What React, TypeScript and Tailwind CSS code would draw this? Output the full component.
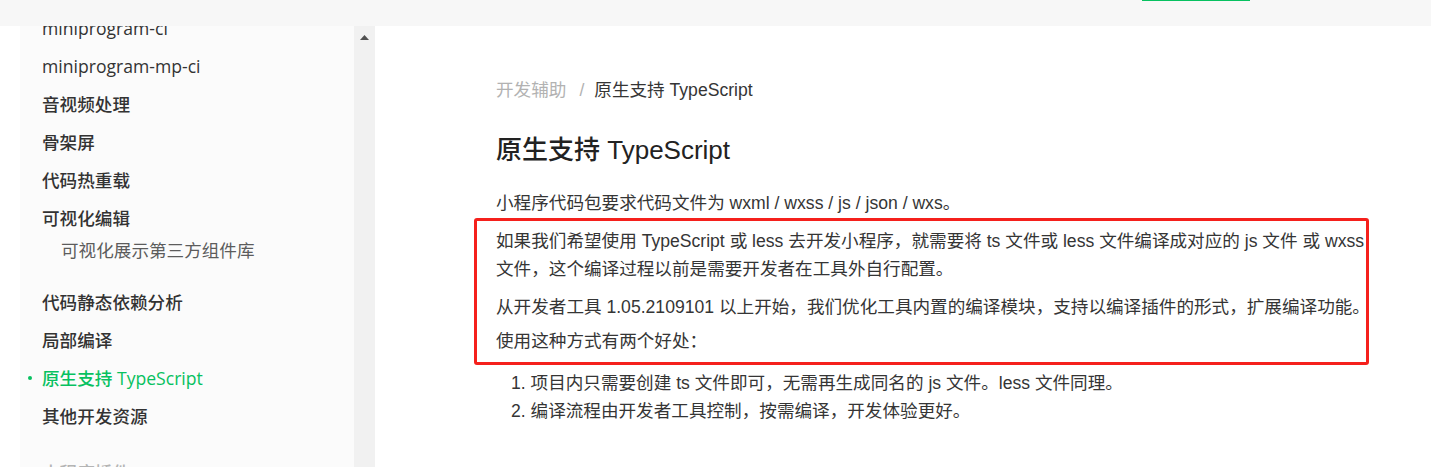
import React from "react";

type NavItem = {
  label: string;
  sub?: boolean;
  active?: boolean;
  muted?: boolean;
};

const NAV_ITEMS: NavItem[] = [
  { label: "miniprogram-ci" },
  { label: "miniprogram-mp-ci" },
  { label: "音视频处理" },
  { label: "骨架屏" },
  { label: "代码热重载" },
  { label: "可视化编辑" },
  { label: "可视化展示第三方组件库", sub: true },
  { label: "代码静态依赖分析" },
  { label: "局部编译" },
  { label: "原生支持 TypeScript", active: true },
  { label: "其他开发资源" },
  { label: "小程序插件", muted: true },
];

function SideNav() {
  return (
    <aside className="flex w-[375px] shrink-0 font-['Open_Sans','Noto_Sans_CJK_SC',sans-serif]">
      <div className="w-[20px] bg-white" />
      <div className="w-[334px] overflow-hidden bg-[#fbfbfb]">
        <ul className="-mt-[17px] pl-[22px]">
          {NAV_ITEMS.map((item) => {
            if (item.sub) {
              return (
                <li
                  key={item.label}
                  className="mb-[20px] flex h-[26px] items-center pl-[19px] text-[17.6px] text-[#5c5c5c]"
                >
                  {item.label}
                </li>
              );
            }
            if (item.muted) {
              return (
                <li
                  key={item.label}
                  className="mt-[18px] flex h-[38px] items-center text-[17.6px] font-medium text-[#b4b4b4]"
                >
                  {item.label}
                </li>
              );
            }
            return (
              <li
                key={item.label}
                className={
                  item.active
                    ? "flex h-[38px] items-center text-[17.6px] font-medium text-[#07c160]"
                    : "flex h-[38px] items-center text-[17.6px] font-medium text-[#333333]"
                }
              >
                {item.active && (
                  <span className="-ml-[14px] mr-[10px] h-[4px] w-[4px] rounded-full bg-[#07c160]" />
                )}
                {item.label}
              </li>
            );
          })}
        </ul>
      </div>
      <div className="flex w-[21px] justify-center bg-[#f1f1f1] pt-[9px]">
        <svg width="9" height="5" viewBox="0 0 9 5">
          <polygon points="4.5,0 9,5 0,5" fill="#505050" />
        </svg>
      </div>
    </aside>
  );
}

function Article() {
  return (
    <main className="flex-1 bg-white pl-[121px] pt-[50px] text-[17.6px] leading-[28px] text-[#353535]">
      <div className="w-[888px]">
        <div className="flex">
          <span className="text-[#b2b2b2]">开发辅助</span>
          <span className="ml-[13px] mr-[10px] text-[#b2b2b2]">/</span>
          <span>原生支持 TypeScript</span>
        </div>

        <h1 className="mt-[28px] text-[26px] font-medium leading-[36px] text-[#222222]">
          原生支持 TypeScript
        </h1>

        <p className="mt-[21px] mb-[10px]">
          小程序代码包要求代码文件为 wxml / wxss / js / json / wxs。
        </p>

        <div className="relative">
          <p className="mb-[10px]">
            如果我们希望使用 TypeScript 或 less 去开发小程序，就需要将 ts 文件或 less 文件编译成对应的 js 文件 或 wxss 文件，这个编译过程以前是需要开发者在工具外自行配置。
          </p>
          <p className="mb-[6px]">
            从开发者工具 1.05.2109101 以上开始，我们优化工具内置的编译模块，支持以编译插件的形式，扩展编译功能。
          </p>
          <p>使用这种方式有两个好处：</p>
          <div className="pointer-events-none absolute -top-[9px] -bottom-[10px] -left-[22px] w-[895px] rounded-[3px] border-[3px] border-[#f5201c]" />
        </div>

        <ol className="mt-[14px] pl-[15px]">
          <li>1. 项目内只需要创建 ts 文件即可，无需再生成同名的 js 文件。less 文件同理。</li>
          <li>2. 编译流程由开发者工具控制，按需编译，开发体验更好。</li>
        </ol>
      </div>
    </main>
  );
}

export default function App() {
  return (
    <div className="flex h-[467px] w-[1431px] flex-col overflow-hidden bg-white font-['Liberation_Sans','Noto_Sans_CJK_SC',sans-serif]">
      <div className="flex h-[26px] shrink-0 bg-[#f7f7f7]">
        <div className="ml-[1142px] h-px w-[108px] bg-[#07c160]" />
      </div>
      <div className="flex min-h-0 flex-1">
        <SideNav />
        <Article />
      </div>
    </div>
  );
}
